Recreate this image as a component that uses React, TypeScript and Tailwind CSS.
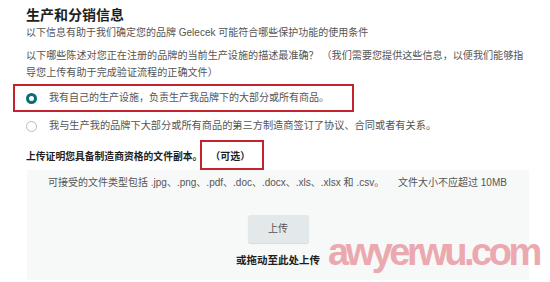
import React from 'react';

const FONT = { fontFamily: '"Liberation Sans", "Noto Sans CJK SC", sans-serif' };

export default function App() {
  return (
    <div className="relative h-[282px] w-[550px] overflow-hidden bg-white" style={FONT}>
      <div className="pl-[26px] pt-[6px]">
        <h1 className="text-[14px] font-bold leading-[18px] text-[#1e1e1e]">生产和分销信息</h1>
        <p className="mt-[2px] text-[10px] leading-[14px] text-[#555]">
          以下信息有助于我们确定您的品牌 Gelecek 可能符合哪些保护功能的使用条件
        </p>
        <p className="mt-[7px] w-[505px] text-[10.1px] leading-[17px] text-[#555]">
          以下哪些陈述对您正在注册的品牌的当前生产设施的描述最准确？ （我们需要您提供这些信息，以便我们能够指导您上传有助于完成验证流程的正确文件）
        </p>

        <div className="-ml-[13px] mt-[3px] flex h-[28px] w-[341px] items-center gap-[12px] border-2 border-[#c3232d] pl-[11px]">
          <span className="h-[11px] w-[11px] rounded-full border-[3.5px] border-[#0f6c74] bg-white" />
          <span className="text-[10px] leading-[14px] text-[#555]">
            我有自己的生产设施，负责生产我品牌下的大部分或所有商品。
          </span>
        </div>

        <div className="flex h-[28px] items-center gap-[12px]">
          <span className="h-[11px] w-[11px] rounded-full border border-[#b9bdc0] bg-white" />
          <span className="text-[10.2px] leading-[14px] text-[#555]">
            我与生产我的品牌下大部分或所有商品的第三方制造商签订了协议、合同或者有关系。
          </span>
        </div>

        <div className="flex h-[30px] items-stretch">
          <span className="pt-[10px] text-[9.8px] font-bold leading-[14px] text-[#1e1e1e]">
            上传证明您具备制造商资格的文件副本。
          </span>
          <span className="ml-[-2px] w-[64px] border-2 border-[#c3232d] pl-[8px] pt-[8px] text-[10px] font-bold leading-[14px] text-[#1e1e1e]">
            （可选）
          </span>
        </div>

        <div className="ml-[1px] w-[502px] bg-[#f7f8f8] pb-[13px] pl-[21px] pt-[6px]">
          <div className="flex whitespace-nowrap text-[10px] leading-[14px] text-[#555]">
            <span className="w-[329px]">可接受的文件类型包括 .jpg、.png、.pdf、.doc、.docx、.xls、.xlsx 和 .csv。</span>
            <span className="ml-[21px]">文件大小不应超过 10MB</span>
          </div>
          <div className="-ml-[21px] mt-[25px] flex flex-col items-center">
            <button className="h-[28px] w-[61px] rounded-[3px] bg-[#e3e8ea] text-[10px] leading-[14px] text-[#555] shadow-[0_1px_1px_rgba(0,0,0,0.12)]">
              上传
            </button>
            <span className="mt-[10px] text-[10.5px] font-bold leading-[14px] text-[#1e1e1e]">
              或拖动至此处上传
            </span>
          </div>
        </div>
      </div>

      <div
        className="pointer-events-none absolute left-[328px] top-[232px] text-[38px] font-bold leading-[40px] tracking-[-3.5px] text-[#eaa0a6] opacity-90"
        style={{ fontFamily: '"Liberation Sans", sans-serif' }}
      >
        awyerwu.com
      </div>
    </div>
  );
}
